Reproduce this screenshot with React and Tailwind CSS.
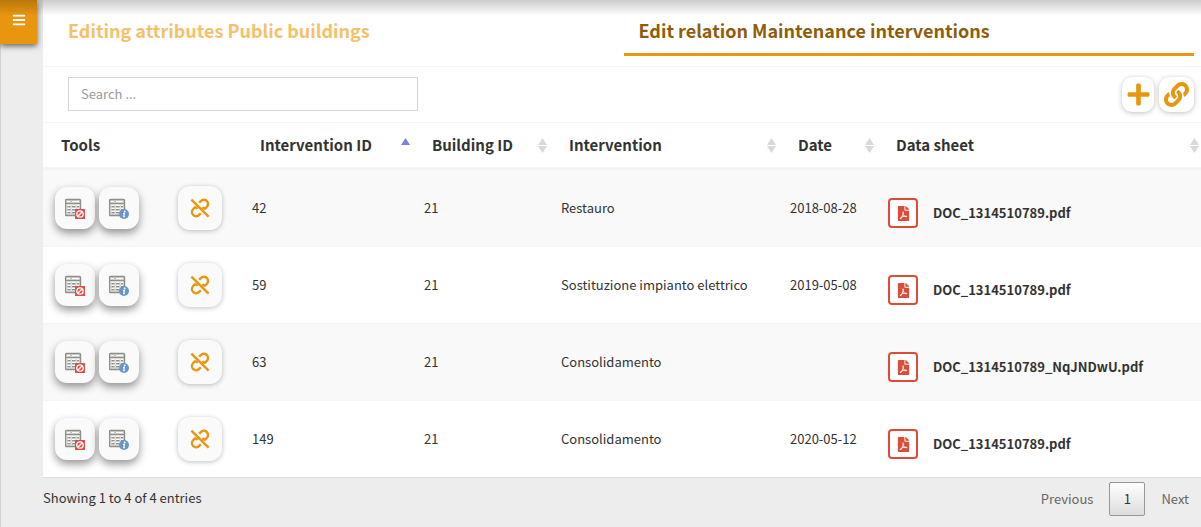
import React from 'react';
import { FaBars, FaPlus, FaLink, FaFilePdf } from 'react-icons/fa';

const rows = [
  { id: '42', building: '21', name: 'Restauro', date: '2018-08-28', file: 'DOC_1314510789.pdf' },
  { id: '59', building: '21', name: 'Sostituzione impianto elettrico', date: '2019-05-08', file: 'DOC_1314510789.pdf' },
  { id: '63', building: '21', name: 'Consolidamento', date: '', file: 'DOC_1314510789_NqJNDwU.pdf' },
  { id: '149', building: '21', name: 'Consolidamento', date: '2020-05-12', file: 'DOC_1314510789.pdf' },
];

const columns = [
  { label: 'Intervention ID', sorted: true, width: 'w-[172px]' },
  { label: 'Building ID', width: 'w-[137px]' },
  { label: 'Intervention', width: 'w-[229px]' },
  { label: 'Date', width: 'w-[98px]' },
  { label: 'Data sheet', width: '' },
];

function SheetIcon({ children }) {
  return (
    <svg width="20" height="22" viewBox="0 -2 20 22" className="shrink-0" aria-hidden="true">
      <rect x="0.5" y="0.5" width="15" height="16" rx="1" fill="#dededb" stroke="#8d8d89" strokeWidth="1.4" />
      <path d="M1 2.5h14" stroke="#c0c0bc" strokeWidth="2" />
      <path d="M2 2.5h3M7 2.5h7" stroke="#fff" />
      <path d="M1 4.5h14" stroke="#8d8d89" />
      <path d="M2.5 7.5h3M7 7.5h3.5M12 7.5h2M2.5 10.5h3M7 10.5h3.5M12 10.5h2M2.5 13.5h3M7 13.5h3.5" stroke="#8f8f8b" strokeWidth="1.3" />
      <path d="M2.5 6.5h3M7 6.5h3.5M12 6.5h2M2.5 9.5h3M7 9.5h3.5M12 9.5h2M2.5 12.5h3M7 12.5h3.5" stroke="#fff" />
      {children}
    </svg>
  );
}

function RemoveSheetIcon() {
  return (
    <SheetIcon>
      <rect x="10" y="10" width="10" height="10" rx="0.5" fill="#e24a48" />
      <circle cx="15" cy="15" r="3.2" fill="none" stroke="#fff" strokeWidth="1.3" />
      <path d="M13 17l4-4" stroke="#fff" strokeWidth="1.3" />
    </SheetIcon>
  );
}

function InfoSheetIcon() {
  return (
    <SheetIcon>
      <circle cx="15" cy="15" r="5" fill="#6896cb" />
      <circle cx="15.7" cy="12.4" r="0.9" fill="#fff" />
      <path d="M14 14.4h1.4l-.7 3.2h1.2" fill="none" stroke="#fff" strokeWidth="1.2" />
    </SheetIcon>
  );
}

function UnlinkIcon() {
  return (
    <svg
      width="20"
      height="20"
      viewBox="0 0 20 20"
      fill="none"
      stroke="#e8960f"
      strokeWidth="2.4"
      strokeLinejoin="round"
      aria-hidden="true"
    >
      <path d="M1.4 1.6L18.6 18.6" />
      <path d="M9.2 4.8L10.8 3.1a4.1 4.1 0 0 1 6.1 5.7L14.6 11.2" />
      <path d="M14.9 10.8Q13.4 10.8 12.7 9" />
      <path d="M10.8 15.2L9.2 16.9a4.1 4.1 0 0 1-6.1-5.7L5.4 8.8" />
      <path d="M5.1 9.2Q6.6 9.2 7.3 11" />
    </svg>
  );
}

function SortIcon({ sorted }) {
  return (
    <svg width="9" height="15" viewBox="0 0 9 15" className="shrink-0" aria-hidden="true">
      <path d="M4.5 0L9 7H0z" fill={sorted ? '#7d80dd' : '#d9d9d9'} />
      {!sorted && <path d="M0 8h9l-4.5 7z" fill="#d9d9d9" />}
    </svg>
  );
}

const tool =
  'flex h-[42px] w-10 items-center justify-center rounded-xl bg-[#fafafa] shadow-[0_4px_8px_rgba(0,0,0,0.42)]';
const action =
  'flex h-[35px] items-center justify-center rounded-[10px] bg-white text-[#e8960f] shadow-[0_1px_5px_rgba(0,0,0,0.25)]';

export default function App() {
  return (
    <div className="relative flex min-h-screen bg-[#ededed] font-['Noto_Sans_CJK_JP','Noto_Sans',sans-serif] text-[13px] leading-5 text-[#333]">
      <aside className="w-[43px] shrink-0 border-l border-[#d2d2d2]">
        <button
          aria-label="Toggle menu"
          className="-ml-px flex h-11 w-[37px] items-center justify-center bg-[#e8960f] pb-1 text-white shadow-[0_2px_6px_rgba(0,0,0,0.6)]"
        >
          <FaBars size={14} />
        </button>
      </aside>

      <main className="min-w-0 flex-1">
        <div className="bg-white">
          <nav className="flex border-b border-[#f4f4f4] pt-1.5 pr-[7px] pb-2.5 pl-2.5 text-lg font-bold">
            <a href="#attributes" className="flex-1 border-b-3 border-transparent px-[15px] pt-[11px] pb-[9px] leading-[27px] text-[#f6c069]">
              Editing attributes Public buildings
            </a>
            <a href="#relation" className="flex-1 border-b-3 border-[#e8960f] px-[15px] pt-[11px] pb-[9px] leading-[27px] text-[#8f5c0a]">
              Edit relation Maintenance interventions
            </a>
          </nav>

          <div className="flex items-start justify-between border-b border-[#f4f4f4] py-2.5 pr-[7px] pl-[25px]">
            <input
              type="search"
              aria-label="Search"
              placeholder="Search ..."
              className="h-[34px] w-[350px] border border-[#d2d6de] bg-white px-3 pb-0.5 placeholder:text-[#999]"
            />
            <div className="flex gap-[5px]">
              <button aria-label="Add relation" className={action + ' w-8'}>
                <FaPlus size={25} />
              </button>
              <button aria-label="Link relation" className={action + ' w-[35px]'}>
                <FaLink size={25} />
              </button>
            </div>
          </div>

          <table className="w-full table-fixed border-separate border-spacing-0 text-left">
            <thead className="text-[15px] leading-6">
              <tr className="h-[47px]">
                <th className="w-[199px] border-b-3 border-[#f4f4f4] px-[18px] font-bold">Tools</th>
                {columns.map((c) => (
                  <th key={c.label} className={'border-b-3 border-[#f4f4f4] pr-1 pl-[18px] font-bold whitespace-nowrap last:pr-0.5 ' + c.width}>
                    <div className="flex items-center justify-between">
                      {c.label}
                      <SortIcon sorted={c.sorted} />
                    </div>
                  </th>
                ))}
              </tr>
            </thead>
            <tbody>
              {rows.map((r) => (
                <tr key={r.id} className="group h-[77px] odd:bg-[#f9f9f9]">
                  <td className="border-b border-[#f4f4f4] pl-3 group-last:border-[#ddd]">
                    <div className="flex items-center gap-1">
                      <button aria-label="Delete record" className={tool}>
                        <RemoveSheetIcon />
                      </button>
                      <button aria-label="Record details" className={tool}>
                        <InfoSheetIcon />
                      </button>
                      <button
                        aria-label="Unlink record"
                        className="ml-[35px] flex size-11 items-center justify-center rounded-xl bg-[#fafafa] shadow-[0_1px_5px_rgba(0,0,0,0.25)]"
                      >
                        <UnlinkIcon />
                      </button>
                    </div>
                  </td>
                  <td className="border-b border-[#f4f4f4] px-2.5 group-last:border-[#ddd]">{r.id}</td>
                  <td className="border-b border-[#f4f4f4] px-2.5 group-last:border-[#ddd]">{r.building}</td>
                  <td className="border-b border-[#f4f4f4] px-2.5 group-last:border-[#ddd]">{r.name}</td>
                  <td className="border-b border-[#f4f4f4] px-2.5 whitespace-nowrap group-last:border-[#ddd]">{r.date}</td>
                  <td className="border-b border-[#f4f4f4] px-2.5 pt-2.5 group-last:border-[#ddd]">
                    <a href={'#' + r.file} className="flex items-center gap-[15px] font-bold">
                      <span className="flex size-[30px] items-center justify-center rounded-[4px] border-2 border-[#dd4b39] bg-white text-[#dd4b39]">
                        <FaFilePdf size={15} />
                      </span>
                      {r.file}
                    </a>
                  </td>
                </tr>
              ))}
            </tbody>
          </table>
        </div>

        <footer className="flex items-start justify-between pt-1 pb-2.5">
          <p className="pt-1.5">Showing 1 to 4 of 4 entries</p>
          <div className="flex items-center text-[#666]">
            <button className="h-[34px] px-4">Previous</button>
            <button className="h-[34px] w-9 rounded-xs border border-[#979797] bg-linear-to-b from-white to-[#dcdcdc] text-[#333]">1</button>
            <button className="h-[34px] pr-3 pl-4">Next</button>
          </div>
        </footer>
      </main>

      <div className="pointer-events-none absolute inset-x-0 top-0 h-4 bg-linear-to-b from-black/20 to-transparent" />
    </div>
  );
}
